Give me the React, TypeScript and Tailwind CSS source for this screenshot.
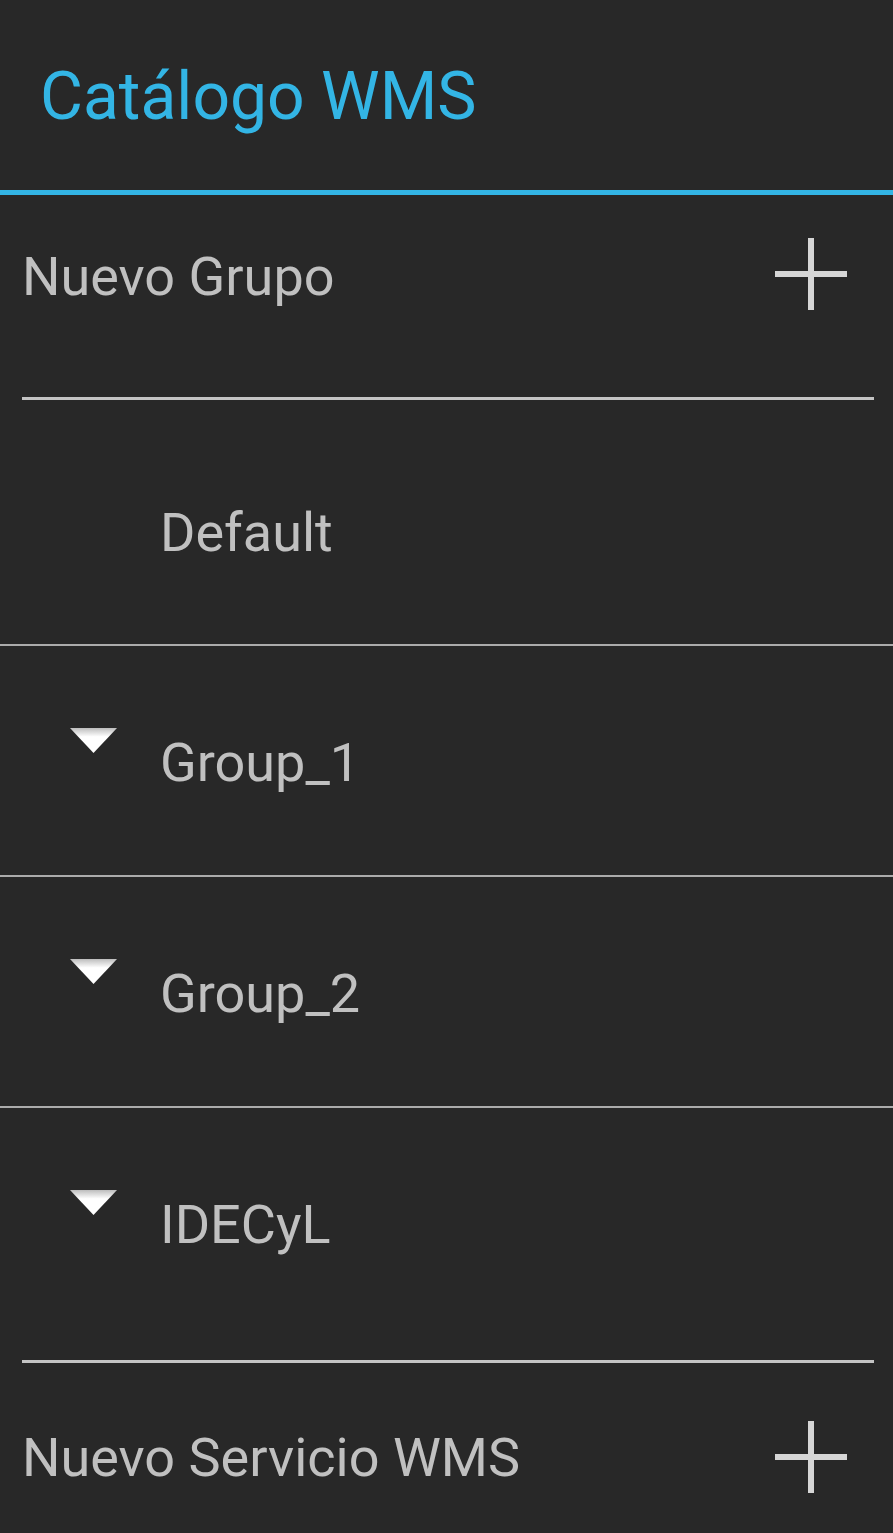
import React from "react";

const font = { fontFamily: "Roboto, 'Noto Sans', sans-serif" };

function Plus() {
  return (
    <svg width="72" height="72" viewBox="0 0 72 72" className="block">
      <rect x="33" y="0" width="6" height="72" fill="#d6d6d6" />
      <rect x="0" y="33" width="72" height="6" fill="#d6d6d6" />
    </svg>
  );
}

function Arrow() {
  return (
    <svg width="51" height="29" viewBox="-2 -2 51 29" className="block">
      <defs>
        <linearGradient id="tri" x1="0" y1="0" x2="0" y2="1">
          <stop offset="0" stopColor="#bdbdbd" />
          <stop offset="0.35" stopColor="#ffffff" />
          <stop offset="1" stopColor="#ffffff" />
        </linearGradient>
        <filter id="soft" x="-10%" y="-20%" width="120%" height="140%">
          <feGaussianBlur stdDeviation="0.7" />
        </filter>
      </defs>
      <polygon points="0,0 47,0 23.5,25" fill="url(#tri)" filter="url(#soft)" />
    </svg>
  );
}

type Row = { name: string; arrow: boolean; h: string };

const rows: Row[] = [
  { name: "Default", arrow: false, h: "h-[244px]" },
  { name: "Group_1", arrow: true, h: "h-[229px]" },
  { name: "Group_2", arrow: true, h: "h-[229px]" },
  { name: "IDECyL", arrow: true, h: "h-[252px]" },
];

export default function App() {
  return (
    <div className="min-h-screen w-full bg-[#282828] overflow-hidden" style={font}>
      {/* action bar */}
      <div className="h-[190px] pl-[40px] pt-[64px]">
        <h1 className="text-[66px] leading-none text-[#33b5e5] font-normal">Catálogo WMS</h1>
      </div>
      <div className="h-[5px] bg-[#33b5e5]" />

      {/* nuevo grupo */}
      <div className="h-[202px] flex justify-between pl-[22px] pr-[46px]">
        <span className="text-[54px] leading-none text-[#c0c0c0] mt-[55px]">Nuevo Grupo</span>
        <div className="mt-[43px]">
          <Plus />
        </div>
      </div>
      <div className="ml-[22px] mr-[19px] h-[3px] bg-[#c4c4c4]" />

      {rows.map((r, i) => (
        <div key={r.name}>
          {i > 0 && <div className="h-[2px] bg-[#ababab]" />}
          <div className={`${r.h} relative flex`}>
            {r.arrow && (
              <div className="absolute left-[68px] top-[80px]">
                <Arrow />
              </div>
            )}
            <span
              className={`text-[54px] leading-none text-[#c0c0c0] pl-[160px] ${
                r.arrow ? "pt-[90px]" : "pt-[106px]"
              }`}
            >
              {r.name}
            </span>
          </div>
        </div>
      ))}
      <div className="ml-[22px] mr-[19px] h-[3px] bg-[#c4c4c4]" />

      {/* nuevo servicio */}
      <div className="h-[170px] flex justify-between pl-[22px] pr-[46px]">
        <span className="text-[54px] leading-none text-[#c0c0c0] mt-[68px]">Nuevo Servicio WMS</span>
        <div className="mt-[58px]">
          <Plus />
        </div>
      </div>
    </div>
  );
}
